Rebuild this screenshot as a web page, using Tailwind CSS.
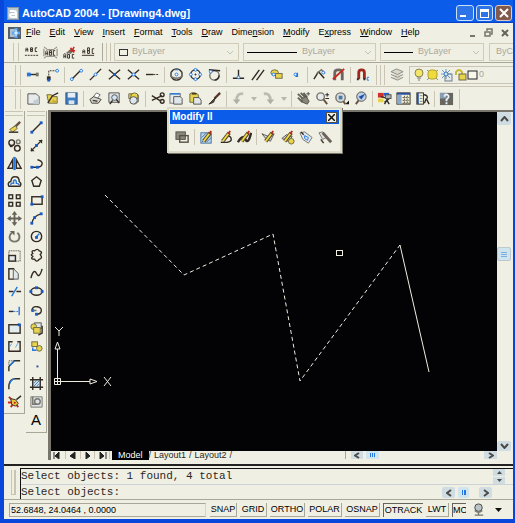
<!DOCTYPE html>
<html lang="en">
<head>
  <meta charset="UTF-8" />
  <meta name="viewport" content="width=device-width, initial-scale=1.0"/>
  <title>AutoCAD 2004 - [Drawing4.dwg]</title>

  <!-- Tailwind CDN -->
  <script src="https://cdn.jsdelivr.net/npm/@tailwindcss/browser@4"></script>

  <script>
    // Toolbar icons, 16x16. K = dark stroke, B = blue stroke, G = gray stroke
    const K = 'fill="none" stroke="#332b24" stroke-width="1.5"';
    const B = 'fill="none" stroke="#2478e0" stroke-width="1.5"';
    const G = 'fill="none" stroke="#77756c" stroke-width="1.5"';
    const Y = 'fill="#e8d44c" stroke="#6e6846"';
    const dot = (x, y) => `<rect x="${x - 1.5}" y="${y - 1.5}" width="3" height="3" fill="#1658c8"/>`;
    const ring = (x, y) => `<circle cx="${x}" cy="${y}" r="1.5" fill="#fff" stroke="#2478e0"/>`;
    const pencil = '<path d="M5 12L12 3" stroke="#55482f" stroke-width="4"/><path d="M5 12L11 4" stroke="#f0d840" stroke-width="2"/><path d="M11 4L13 1" stroke="#b82c22" stroke-width="2"/>';
    const icons = {
      abc: `<path d="M2 7V4L3 3L4 4V7M2 5H4M7 3V7H9V5H7H9V3H7M14 3H12V7H14" fill="none" stroke="#332b24"/><path d="M1 11H15" stroke="#332b24" stroke-dasharray="2 1"/>`,
      find: `<path d="M3 11V7L4 6L5 7V11M3 9H5M7 6V11H9V6H7M7 8H9M13 6H11V11H13" fill="none" stroke="#332b24"/><path d="M1 2L5 5H11L15 2M1 14L4 12H12L15 14M1 4V12M15 4V12" fill="none" stroke="#77756c"/>`,
      style: `<path d="M2 14V10L3 9L4 10V14M2 12H4M6 10V14H8V10H6M13 10H11V14H13" fill="none" stroke="#332b24"/><path d="M5 9L11 4M8 9L13 5" stroke="#77756c" stroke-width="2"/><path d="M9 3L13 8M13 2L10 7M8 6H14" stroke="#c82820" stroke-width="1.5"/>`,
      just: `<path d="M2 9V6L3 5L4 6V9M2 7H4M7 3V9H9V6H7H9V3H7M14 4H12V9H14M1 11H14" fill="none" stroke="#332b24"/>`,
      track: `<path d="M3 8H13" ${K}/>${dot(3, 8)}<rect x="1" y="6" width="4" height="4" fill="#2478e0"/><path d="M12 6V10" stroke="#77756c" stroke-width="3"/>`,
      from: `<path d="M4 12V4H12" fill="none" stroke="#332b24" stroke-dasharray="2 1"/><rect x="2" y="10" width="4" height="4" fill="#332b24"/>${dot(4, 14)}${ring(13, 4)}`,
      endp: `<path d="M3 13L12 4" ${K}/>${ring(3, 13)}${ring(13, 4)}`,
      midp: `<path d="M2 14L14 2" ${K}/>${ring(8, 8)}`,
      inter: `<path d="M2 3L14 13M14 3L2 13" ${K}/>${dot(8, 8)}`,
      appint: `<path d="M2 3L14 13M14 3L2 13" ${K}/>${ring(8, 8)}`,
      ext: `<path d="M1 8H9" ${K}/><path d="M9 8H15" stroke="#332b24" stroke-dasharray="2 1"/>`,
      center: `<circle cx="8" cy="8" r="6" ${K}/><path d="M2 5V10Q8 14 14 10V5" ${G}/>${ring(8, 8)}<path d="M6 3H10" stroke="#2478e0"/>`,
      quad: `<circle cx="8" cy="8" r="5" ${K}/>${ring(8, 3)}${ring(8, 13)}${ring(3, 8)}${ring(13, 8)}<path d="M8 7V9M7 8H9" stroke="#332b24"/>`,
      tan: `<circle cx="8" cy="9" r="5" ${G}/><path d="M2 3L14 4" ${K}/>${ring(4, 5)}<path d="M13 9Q12 14 8 14" ${K}/>`,
      perp: `<path d="M8 3V11M2 12H14" ${K}/>${ring(8, 11)}`,
      para: `<path d="M2 14L10 3M7 14L15 3" ${K}/>`,
      insert: `<ellipse cx="6" cy="6" rx="4" ry="3" ${Y}/><rect x="7" y="7" width="7" height="5" ${Y}/>${ring(5, 8)}`,
      node: `${ring(8, 8)}<path d="M10 6V10H8" ${B}/>`,
      near: `<path d="M2 13L7 5M7 5L13 12" ${K}/><path d="M5 7L10 3L14 7" ${G}/>${ring(12, 6)}`,
      none: `<path d="M4 14V6Q4 3 8 3Q12 3 12 6V14" fill="none" stroke="#6c6660" stroke-width="3"/><path d="M2 13L14 2" stroke="#c82820" stroke-width="2"/>`,
      magnet: `<path d="M4 13V6Q4 3 7 3Q10 3 10 6V13" fill="none" stroke="#9c2820" stroke-width="3"/><path d="M3 12V14M10 12V14" stroke="#332b24" stroke-width="2"/><path d="M15 11H13V14H15" fill="none" stroke="#2478e0"/>`,
      layers: `<path d="M1 5L7 2L14 5L8 8ZM1 8L8 11L14 8M1 11L8 14L14 11" fill="#d8d7cc" stroke="#8c8a80"/>`,
      neu: `<path d="M2 3H11L14 6V14H2Z" fill="#e6eaea" stroke="#55524c"/><path d="M8 14V10L14 8V14Z" fill="#c2ccd2"/>`,
      open: `<path d="M2 4H7L8 6H13V13H4Z" ${Y}/><path d="M3 13L8 5L14 2" ${K}/><path d="M8 10L12 12" stroke="#c8a830" stroke-width="2"/>`,
      save: `<rect x="2" y="2" width="12" height="12" fill="#3c7cc4" stroke="#2f527c"/><rect x="4" y="2" width="8" height="5" fill="#e6eef4"/><rect x="5" y="10" width="6" height="4" fill="#dce4e8"/>`,
      print: `<path d="M5 7L9 2L13 4L10 8" fill="#fff" stroke="#666"/><path d="M2 9L6 6L14 9L11 13L4 13Z" fill="#d4d4cc" stroke="#44423c"/><path d="M5 10L10 11" stroke="#44423c" stroke-width="1.5"/>`,
      preview: `<path d="M2 2H13V12H2Z" fill="#dbe3e8" stroke="#55524c"/><circle cx="8" cy="7" r="3" fill="#cfe4f4" stroke="#55524c"/><path d="M6 10L3 14M10 9L13 13" ${K}/>`,
      publish: `<path d="M3 3H9V8H3Z" ${Y}/><circle cx="9" cy="6" r="4" ${Y}/><circle cx="8" cy="10" r="4" fill="#dce6ee" stroke="#55524c"/><path d="M13 4V11L9 14" ${G}/>`,
      cut: `<path d="M2 5L12 11M2 10L13 5" ${K}/><circle cx="13" cy="4" r="2" ${K}/><circle cx="13" cy="11" r="2" ${K}/>`,
      copy: `<rect x="1" y="3" width="11" height="10" fill="#e6eaea" stroke="#77756c"/><path d="M5 6H12L14 8V14H5Z" fill="#dde6ea" stroke="#55524c"/><path d="M1 3H12" ${B}/>`,
      paste: `<path d="M2 3Q6 0 11 4V12H2Z" ${Y}/><path d="M6 7H12L14 10V14H6Z" fill="#e0e6e8" stroke="#55524c"/><path d="M4 3H9" ${K}/>`,
      brush: `<path d="M14 2L8 8" stroke="#55382a" stroke-width="2.5"/><path d="M9 7L4 12L2 14L7 12Z" fill="#55524c" stroke="#332b24"/>`,
      undo: `<path d="M13 3Q6 2 6 10" fill="none" stroke="#bdbcb2" stroke-width="3"/><path d="M2 9H10L6 14Z" fill="#b0afa6"/>`,
      redo: `<path d="M3 3Q10 2 10 10" fill="none" stroke="#bdbcb2" stroke-width="3"/><path d="M6 9H14L10 14Z" fill="#b0afa6"/>`,
      pan: `<path d="M2 3L8 9M5 2L10 7M8 2L12 7M2 7L7 12" stroke="#66645a" stroke-width="2"/><path d="M6 8L11 6L14 11L12 14L7 12Z" fill="#88867a" stroke="#55524c"/><path d="M11 3H15M13 1V5" stroke="#55524c"/>`,
      zoomrt: `<circle cx="6" cy="6" r="4" fill="#e6ecee" stroke="#77756c" stroke-width="1.5"/><path d="M9 9L13 14" stroke="#665040" stroke-width="2"/><path d="M11 4H15M13 2V6M11 8H15" stroke="#222"/>`,
      zoomwin: `<circle cx="7" cy="7" r="5" fill="#d8dfe2" stroke="#77756c" stroke-width="1.5"/><rect x="5" y="5" width="4" height="4" fill="#4878a8"/><path d="M10 11L12 14" stroke="#665040" stroke-width="2"/><path d="M12 14H16V10Z" fill="#111"/>`,
      zoomprev: `<circle cx="9" cy="6" r="5" fill="#bed0e4" stroke="#55524c"/><path d="M6 10L3 14" stroke="#665040" stroke-width="2"/><path d="M13 3L6 6L9 9Z" fill="#1c50a8"/>`,
      props: `<rect x="1" y="2" width="6" height="5" fill="#d03028"/><rect x="7" y="2" width="6" height="3" fill="#1c60d8"/><path d="M1 8H7V12H1Z" fill="#e8d44c"/><path d="M4 6L13 8L8 12M10 9L13 14M11 9L8 14" ${K}/><rect x="9" y="4" width="6" height="4" fill="#a7b2b8" stroke="#55524c"/>`,
      dc: `<rect x="1" y="2" width="14" height="12" fill="#f7f5d6" stroke="#332b24"/><rect x="1" y="2" width="14" height="2" fill="#2450a0"/><rect x="2" y="4" width="4" height="10" fill="#8ca8c8"/><path d="M7 7H14M7 10H14M7 13H14M9 5V14M12 5V14" stroke="#55524c" stroke-dasharray="2 1"/>`,
      palette: `<rect x="2" y="2" width="7" height="12" fill="#f7f5d6" stroke="#332b24"/><rect x="2" y="2" width="2" height="12" fill="#2450a0"/><path d="M5 5H8M5 8H8M5 11H8" stroke="#6b88a8"/><path d="M9 4Q14 4 13 8M12 8L15 14M12 8L10 13" ${K}/>`,
      help: `<rect x="1" y="2" width="14" height="13" fill="#66665f"/><path d="M1 2H8V8H1Z" fill="#8a9cb0"/><path d="M6 6Q6 3 9 4Q12 6 8 9V11M8 12V14" fill="none" stroke="#e8f2fa" stroke-width="2"/>`,
      erase: `<path d="M14 2L7 9" stroke="#665040" stroke-width="2.5"/><path d="M9 6L3 10L6 13L11 9Z" ${Y}/><path d="M2 13H12" ${K}/>`,
      copyobj: `<circle cx="5" cy="5" r="3" ${K}/><circle cx="11" cy="11" r="3" ${K}/><circle cx="12" cy="4" r="2" ${G}/><path d="M3 9H6" ${K}/>`,
      mirror: `<path d="M6 4V13H1ZM10 4V13H15Z" ${K}/><path d="M8 1V15" stroke="#2478e0" stroke-width="2.5"/>`,
      offset: `<path d="M2 13Q0 9 4 8Q5 2 9 3Q13 3 13 8Q16 10 14 13Z" ${K}/><path d="M4 12Q4 9 7 10V7Q10 5 10 10Q13 10 13 12" ${B}/>`,
      array: `<rect x="2" y="2" width="4" height="4" ${K}/><rect x="10" y="2" width="4" height="4" ${K}/><rect x="2" y="10" width="4" height="4" ${K}/><rect x="10" y="10" width="4" height="4" ${K}/>`,
      move: `<path d="M8 2V14M2 8H14" stroke="#66645a" stroke-width="2"/><path d="M8 0L11 4H5ZM8 16L5 12H11ZM0 8L4 5V11ZM16 8L12 11V5Z" fill="#66645a"/>`,
      rotate: `<path d="M5 4Q1 8 4 12Q8 15 12 12Q15 7 11 4" fill="none" stroke="#77756c" stroke-width="2"/><path d="M3 2H8V7Z" fill="#66645a"/>`,
      scale: `<rect x="2" y="8" width="7" height="6" fill="#e2e8ea" stroke="#332b24" stroke-width="1.5"/><path d="M2 7V3H14V14H10" fill="none" stroke="#332b24" stroke-dasharray="1 1"/>`,
      stretch: `<path d="M2 3H7V14H2Z" ${K}/><path d="M7 3L12 8V14H7" fill="#dce8ee" stroke="#55524c"/>`,
      trim: `<path d="M2 8H7M10 8H15" ${K}/><path d="M5 13L11 3" ${B}/>`,
      extend: `<path d="M2 9H7" ${K}/><path d="M7 9H12" stroke="#2478e0" stroke-dasharray="2 1"/><path d="M13 4V13" ${B}/>`,
      breakp: `<rect x="2" y="4" width="12" height="9" fill="#e2ecec" stroke="#332b24" stroke-width="1.5"/>${dot(13, 4)}`,
      brk: `<path d="M6 3H2V13H14V3H11" ${K}/><path d="M5 5L3 8M12 4L9 9" stroke="#58a8e8"/>`,
      chamfer: `<path d="M2 14V9L8 3H14" ${K}/><path d="M3 8L8 3" ${B}/><path d="M2 7V3H7" fill="none" stroke="#332b24" stroke-dasharray="1 1"/>`,
      fillet: `<path d="M2 14V10Q3 3 9 3H14" ${K}/><path d="M3 8Q4 4 8 3" ${B}/>`,
      explode: `<path d="M2 3L6 7M1 9H6M4 14L7 10M12 14L9 10" stroke="#c82820" stroke-width="2"/><path d="M4 5L9 6L12 10L9 13L5 11Z" fill="#e8c83c" stroke="#332b24"/><path d="M7 8L10 9L8 11Z" fill="#c82820"/><path d="M10 6L15 2" ${K}/>`,
      line: `<path d="M3 13L13 3" ${K}/>${dot(3, 13)}${dot(13, 3)}`,
      xline: `<path d="M2 14L14 2" ${K}/>${dot(8, 8)}<path d="M10 2H14V6ZM2 10V14H6Z" fill="#332b24"/>`,
      pline: `<path d="M3 12H10Q14 11 14 8Q14 5 9 4" ${K}/>${dot(3, 12)}${dot(9, 12)}`,
      polygon: `<path d="M8 3L13 7L11 13H5L3 7Z" ${K}/>`,
      rect: `<rect x="3" y="4" width="11" height="8" ${K}/>${dot(3, 12)}${dot(14, 4)}`,
      arc: `<path d="M3 14Q4 5 13 3" ${K}/>${dot(3, 13)}${dot(6, 7)}${dot(13, 3)}`,
      circle: `<circle cx="8" cy="8" r="5.5" ${K}/><path d="M8 8L11 5" ${B}/>${dot(8, 9)}`,
      cloud: `<path d="M4 6Q2 2 6 3Q9 0 11 3Q15 4 12 7Q15 11 11 12Q8 16 6 12Q1 12 4 9Q1 7 4 6Z" ${K}/>`,
      spline: `<path d="M2 13Q5 2 8 8T14 3" ${K}/>`,
      ellipse: `<ellipse cx="8" cy="8" rx="6" ry="4" ${K}/>${dot(2, 8)}${dot(8, 4)}${dot(14, 8)}`,
      earc: `<path d="M3 8Q4 3 9 4Q14 5 13 9Q12 12 8 12" ${K}/>${dot(4, 8)}${dot(8, 12)}<path d="M8 8L4 8" ${G}/>`,
      insblk: `<rect x="6" y="2" width="7" height="6" fill="#dde6ea" stroke="#55524c"/><circle cx="5" cy="6" r="3" ${Y}/><rect x="5" y="7" width="7" height="6" ${Y}/><path d="M14 5V13L10 15" ${K}/>`,
      mkblk: `<rect x="3" y="3" width="6" height="5" ${Y}/><circle cx="11" cy="10" r="3" ${Y}/><path d="M4 9V12H8" ${B}/>`,
      point: `<rect x="8" y="8" width="2" height="2" fill="#1c4c98"/>`,
      hatch: `<rect x="4" y="4" width="8" height="8" fill="#cfe2ee"/><path d="M4 1V15M12 1V15M1 4H15M1 12H15" ${K}/><path d="M5 11L11 5M5 8L8 5M8 11L11 8" stroke="#5080b0"/>`,
      region: `<path d="M2 3H14V14H2Z" fill="#dbe3e8" stroke="#77756c"/><circle cx="9" cy="8" r="3" ${G}/><path d="M4 3V11H8" ${G}/>`,
      order: `<rect x="1" y="2" width="10" height="8" fill="#8a8878" stroke="#55524c"/><rect x="5" y="6" width="9" height="7" fill="none" stroke="#55524c" stroke-width="1.5"/>`,
      edhatch: `<rect x="2" y="3" width="11" height="11" fill="#bcd8ee" stroke="#44709c"/><path d="M3 8L8 3M3 13L12 4M8 13L13 8" stroke="#44709c"/>${pencil}`,
      edpline: `<path d="M8 6Q15 6 14 11Q12 14 3 13" ${K}/>${pencil}`,
      edspline: `<path d="M1 13Q6 4 9 10T15 3" fill="none" stroke="#332b24" stroke-width="2.5"/>${pencil}`,
      edattr: `<path d="M1 4L8 7L14 4L10 12L5 9Z" fill="#d7dfe2" stroke="#55524c"/>${pencil}`,
      blkattr: `<path d="M2 9L7 5L13 7L9 12Z" fill="#d7dfe2" stroke="#55524c"/><circle cx="12" cy="12" r="3" ${Y}/>${pencil}`,
      sync: `<path d="M1 3L6 2L14 8L10 14L4 10Z" fill="#dfe9ee" stroke="#77756c"/><path d="M6 6L10 8L9 11L6 9Z" fill="none" stroke="#2478e0"/><path d="M2 2L5 5" ${K}/>`,
      extr: `<path d="M1 3L5 2L9 8L5 10Z" fill="#dfe3e2" stroke="#77756c"/><path d="M5 3L14 13" stroke="#6c6258" stroke-width="3"/><path d="M3 10L6 14" ${K}/>`,
      comm: `<circle cx="8" cy="6" r="4" fill="#b8c4c8" stroke="#44423c"/><path d="M4 9Q8 13 12 9M8 11V14M4 14H13" ${G}/>`
    };

    // "|" is a separator, "v" a flyout arrow
    document.addEventListener("DOMContentLoaded", () => {
      document.querySelectorAll("[data-icons]").forEach((bar) => {
        const column = bar.dataset.dir === "col";
        bar.innerHTML = bar.dataset.icons.split(" ").map((name) => {
          if (name === "|") return '<span class="mx-[2px] h-4 w-px shrink-0 bg-[#c9c5b2]"></span>';
          if (name === "v") return '<button aria-label="More" class="flex w-[11px] shrink-0 justify-center"><svg class="h-1 w-2" viewBox="0 0 8 4"><path d="M1 0H7L4 4Z" fill="#b8b7ae"/></svg></button>';
          const size = column ? "flex h-4 w-5 shrink-0 items-center justify-center" : "flex h-5 w-[19px] shrink-0 items-center justify-center";
          return `<button aria-label="${name}" class="${size}"><svg class="size-[15px]" viewBox="0 0 16 16">${icons[name] || ""}</svg></button>`;
        }).join("");
      });
    });
  </script>
</head>

<body class="flex h-screen flex-col overflow-hidden border-r-2 border-b-4 border-l-4 border-[#0846dc] bg-[#f0efe3] font-['Liberation_Sans',sans-serif] text-[9px] text-[#2b2723]">

  <!-- Title bar -->
  <header class="flex h-[23px] shrink-0 items-center border-b border-[#0740c8] bg-[#0b5ce8] pr-px pl-[3px] pt-[4px]">
    <svg class="h-[13px] w-3" viewBox="0 0 12 13"><rect width="12" height="13" fill="#8396a8"/><rect x="1" y="1" width="10" height="11" fill="#bcc8d0"/><path d="M3 4H7Q9 4 9 6V10H5Q3 10 3 8Q3 7 5 7H9" fill="none" stroke="#fff" stroke-width="2"/></svg>
    <h1 class="ml-[3px] flex-1 text-[11px] font-bold whitespace-nowrap text-white">AutoCAD 2004 - [Drawing4.dwg]</h1>
    <div class="flex gap-[2px]">
      <button aria-label="Minimize" class="flex h-4 w-[18px] items-end rounded-[3px] border border-[#c8e0fa] bg-[#2c74e8] p-[3px]"><span class="h-[2px] w-[6px] bg-white"></span></button>
      <button aria-label="Restore" class="flex h-4 w-[17px] items-center justify-center rounded-[3px] border border-[#c8e0fa] bg-[#2c74e8]"><span class="h-[9px] w-[9px] border border-t-[3px] border-white"></span></button>
      <button aria-label="Close" class="flex h-4 w-[17px] items-center justify-center rounded-[3px] border border-[#e8c8bc] bg-[#805a4c]"><svg class="size-[10px]" viewBox="0 0 10 10"><path d="M1 1L9 9M9 1L1 9" stroke="#fff" stroke-width="2"/></svg></button>
    </div>
  </header>

  <!-- Menu bar -->
  <nav class="flex h-[19px] shrink-0 items-center pl-[4px]">
    <svg class="mr-[5px] h-[12px] w-[13px]" viewBox="0 0 13 12"><rect width="13" height="12" fill="#55606c"/><path d="M2 2H7V10H2Z" fill="#b8bfc4"/><path d="M8 1V11M4 6H12" stroke="#58a8f4" stroke-width="3"/><path d="M8 3V9M6 6H10" stroke="#fff"/></svg>
    <div class="flex flex-1 gap-[9px] text-black">
      <a href="#"><u>F</u>ile</a>
      <a href="#"><u>E</u>dit</a>
      <a href="#"><u>V</u>iew</a>
      <a href="#"><u>I</u>nsert</a>
      <a href="#"><u>F</u>ormat</a>
      <a href="#"><u>T</u>ools</a>
      <a href="#"><u>D</u>raw</a>
      <a href="#">Dime<u>n</u>sion</a>
      <a href="#"><u>M</u>odify</a>
      <a href="#">E<u>x</u>press</a>
      <a href="#"><u>W</u>indow</a>
      <a href="#"><u>H</u>elp</a>
    </div>
    <div class="flex items-center gap-2 pr-1">
      <button aria-label="Minimize drawing"><svg class="size-[9px]" viewBox="0 0 9 9"><path d="M3 8H8" stroke="#77756c" stroke-width="2"/></svg></button>
      <button aria-label="Restore drawing"><svg class="size-[9px]" viewBox="0 0 9 9"><path d="M3 3V1H8V6H7M1 4H6V8H1Z" fill="none" stroke="#77756c" stroke-width="1.5"/></svg></button>
      <button aria-label="Close drawing"><svg class="size-[8px]" viewBox="0 0 8 8"><path d="M1 1L7 7M7 1L1 7" stroke="#66645a" stroke-width="2"/></svg></button>
    </div>
  </nav>

  <!-- Text and properties toolbars -->
  <div class="flex h-[21px] shrink-0 items-center overflow-hidden border-b border-[#a9a798] pl-[9px]">
    <span class="h-[18px] w-[6px] shrink-0 border-x border-[#c9c5b2]"></span>
    <div class="ml-[3px] flex items-center" data-icons="abc find style just"></div>
    <span class="ml-1 h-[18px] w-px shrink-0 bg-[#a9a798]"></span>
    <span class="mx-[3px] h-[18px] w-[5px] shrink-0 border-x border-[#c9c5b2]"></span>
    <button aria-label="Color" class="flex h-[18px] w-[125px] shrink-0 items-center border border-[#d0ccb8] px-1 text-[#aaa89c]"><span class="mr-1 h-[7px] w-[9px] border border-[#333]"></span>ByLayer<svg class="ml-auto h-[5px] w-2" viewBox="0 0 8 5"><path d="M1 1L4 4L7 1" fill="none" stroke="#c4c2b6"/></svg></button>
    <button aria-label="Linetype" class="ml-1 flex h-[18px] w-[133px] shrink-0 items-center border border-[#d0ccb8] px-[3px] text-[#aaa89c]"><span class="mr-[5px] h-px w-[50px] bg-black"></span>ByLayer<svg class="ml-auto h-[5px] w-2" viewBox="0 0 8 5"><path d="M1 1L4 4L7 1" fill="none" stroke="#c4c2b6"/></svg></button>
    <button aria-label="Lineweight" class="ml-1 flex h-[18px] w-[104px] shrink-0 items-center border border-[#d0ccb8] px-[3px] text-[#aaa89c]"><span class="mr-[5px] h-px w-[29px] bg-black"></span>ByLayer<svg class="ml-auto h-[5px] w-2" viewBox="0 0 8 5"><path d="M1 1L4 4L7 1" fill="none" stroke="#c4c2b6"/></svg></button>
    <button aria-label="Plot style" class="ml-[5px] flex h-[18px] w-20 shrink-0 items-center border border-[#d0ccb8] px-[6px] text-[#aaa89c]">ByColor</button>
  </div>

  <!-- Object snap and layers toolbars -->
  <div class="flex h-[24px] shrink-0 items-center overflow-hidden border-b border-[#c9c5b2] pl-[11px]">
    <span class="h-[20px] w-[6px] shrink-0 border-x border-[#c9c5b2]"></span>
    <div class="ml-[3px] flex items-center" data-icons="track from | endp midp inter appint ext | center quad tan | perp para insert node | near none | magnet"></div>
    <span class="ml-[4px] h-[20px] w-px shrink-0 bg-[#c9c5b2]"></span>
    <span class="mx-[3px] h-[20px] w-[5px] shrink-0 border-x border-[#c9c5b2]"></span>
    <div class="flex shrink-0" data-icons="layers"></div>
    <button aria-label="Layer" class="ml-[2px] flex h-[18px] min-w-0 flex-1 items-center border-y border-l border-[#c9c5b2] text-[#aaa89c]">
      <svg class="ml-[3px] h-[14px] w-[66px] shrink-0" viewBox="0 0 66 14"><circle cx="6" cy="5" r="4" fill="#f2e66a" stroke="#8c8550"/><path d="M4 10H8M5 12H7" stroke="#77756c"/><path d="M14 2L25 12M25 2L14 12" stroke="#7b90a0"/><rect x="15" y="2" width="9" height="9" rx="3" fill="#efdc3c" stroke="#b0a030"/><rect x="32" y="6" width="7" height="7" fill="#e4e8e6" stroke="#6f7e88"/><path d="M28 6H38M33 1V11M29 2L37 10M37 2L29 10" stroke="#6c9ac8"/><circle cx="33" cy="6" r="2" fill="#cfe4f4" stroke="#3c78b8"/><path d="M43 7V4Q46 0 49 4V6" fill="none" stroke="#c8b838" stroke-width="2"/><rect x="46" y="6" width="7" height="6" fill="#e8d44c" stroke="#6e6846"/><rect x="55" y="3" width="9" height="8" fill="#f8f7ee" stroke="#222"/></svg>0
    </button>
  </div>

  <!-- Standard toolbar -->
  <div class="flex h-[23px] shrink-0 items-center overflow-hidden pl-[11px]">
    <span class="h-[20px] w-[6px] shrink-0 border-x border-[#c9c5b2]"></span>
    <div class="ml-[3px] flex items-center" data-icons="neu open save | print preview publish | cut copy paste brush | undo v redo v | pan zoomrt zoomwin zoomprev | props dc palette | help"></div>
    <span class="ml-[3px] h-[20px] w-px shrink-0 bg-[#c9c5b2]"></span>
  </div>

  <!-- Work area -->
  <main class="relative flex min-h-0 flex-1">
    <!-- Modify and Draw toolbars -->
    <div class="flex w-[44px] shrink-0 items-start gap-px pt-[1px]">
      <div class="border-r border-b border-[#a9a798] pb-[3px]">
        <div class="mx-px h-[5px] border-y border-[#c9c5b2]"></div>
        <div class="mt-[3px] flex h-[291px] flex-col justify-between" data-dir="col" data-icons="erase copyobj mirror offset array move rotate scale stretch trim extend breakp brk chamfer fillet explode"></div>
      </div>
      <div class="border-r border-b border-[#a9a798] pb-[3px]">
        <div class="mx-px h-[5px] border-y border-[#c9c5b2]"></div>
        <div class="mt-[3px] flex h-[291px] flex-col justify-between" data-dir="col" data-icons="line xline pline polygon rect arc circle cloud spline ellipse earc insblk mkblk point hatch region"></div>
        <button aria-label="Multiline text" class="block h-[19px] w-5 text-[15px] leading-[19px] text-black">A</button>
      </div>
    </div>

    <!-- Drawing window -->
    <section class="flex min-w-0 flex-1 flex-col border-t-2 border-l-[3px] border-[#77756c]">
      <div class="flex min-h-0 flex-1">
        <div class="min-w-0 flex-1 overflow-hidden bg-[#030205]">
          <svg class="h-[338px] w-[446px]" viewBox="51 112 446 338" fill="none" stroke="#efeee0">
            <path d="M105 195L184 275L273 234L300 381L400 245" stroke-dasharray="4 3"/>
            <path d="M400 245L429 372"/>
            <rect x="336.500" y="250.500" width="6" height="5"/>
            <path d="M57.500 349V381.500H90M54.500 378.500H60.500V384.500H54.500ZM54.500 381.500H60M57.500 379V384M57.500 342L55 349H60ZM97 381.500L90 379V384Z"/>
            <path d="M55 327L59 331V336M63 327L59 331M104 377L111 386M111 377L104 386"/>
          </svg>
        </div>
        <div class="flex w-4 shrink-0 flex-col items-start justify-between">
          <button aria-label="Scroll up" class="flex h-[13px] w-[14px] items-center justify-center rounded-[2px] bg-[#cfdde2]"><svg class="h-[6px] w-[9px]" viewBox="0 0 9 6"><path d="M1 5L4.500 1L8 5" fill="none" stroke="#4c4a46" stroke-width="2"/></svg></button>
          <button aria-label="Vertical scroll" class="mb-[58px] flex h-[14px] w-[14px] flex-col items-center justify-center gap-px rounded-[2px] border border-[#bccacd] bg-[#cfe4ee]"><span class="h-px w-[6px] bg-[#78b0e0]"></span><span class="h-px w-[6px] bg-[#78b0e0]"></span><span class="h-px w-[6px] bg-[#78b0e0]"></span></button>
          <button aria-label="Scroll down" class="flex h-[10px] w-[14px] items-center justify-center rounded-[2px] bg-[#cfdde2]"><svg class="h-[6px] w-[9px]" viewBox="0 0 9 6"><path d="M1 1L4.500 5L8 1" fill="none" stroke="#4c4a46" stroke-width="2"/></svg></button>
        </div>
      </div>
      <!-- Layout tabs -->
      <div class="flex h-[9px] shrink-0 items-start overflow-hidden">
        <svg class="h-[8px] w-[61px] shrink-0" viewBox="0 0 61 8"><path d="M14.500 0V8M29.500 0V8M43.500 0V8M58.500 0V8" stroke="#c9c5b2"/><path d="M3 1V8M8 1V8L4 5ZM24 1V8L19 5ZM35 1V8L39 5ZM49 1V8L53 5ZM55 1V8" fill="#222" stroke="#222"/></svg>
        <div class="flex text-[9px] leading-[9px]">
          <button class="bg-black px-[6px] text-white">Model</button><span>/</span>
          <button class="px-[3px]">Layout1</button><span>/</span>
          <button class="px-[3px]">Layout2</button><span>/</span>
        </div>
        <div class="mr-[16px] ml-auto flex h-[8px] w-[152px] items-center border-l border-[#a9a798] pl-[5px]">
          <button aria-label="Scroll left" class="flex h-[8px] w-[12px] items-center justify-center bg-[#cfdde2]"><svg class="h-[7px] w-[6px]" viewBox="0 0 6 7"><path d="M5 1L1 3.500L5 6" fill="none" stroke="#4c4a46" stroke-width="2"/></svg></button>
          <button aria-label="Horizontal scroll" class="ml-[3px] flex h-[8px] w-[13px] items-center justify-center gap-px bg-[#cfe4ee]"><span class="h-1 w-px bg-[#2478e0]"></span><span class="h-1 w-px bg-[#2478e0]"></span><span class="h-1 w-px bg-[#2478e0]"></span></button>
          <button aria-label="Scroll right" class="ml-auto flex h-[8px] w-[13px] items-center justify-center bg-[#cfdde2]"><svg class="h-[7px] w-[6px]" viewBox="0 0 6 7"><path d="M1 1L5 3.500L1 6" fill="none" stroke="#4c4a46" stroke-width="2"/></svg></button>
        </div>
      </div>
    </section>

    <!-- Modify II, floats over the drawing -->
    <aside class="absolute top-[-3px] left-[163px] w-[175px] border-2 border-[#dcd9c8] bg-[#f0efe3] p-px pb-[4px] shadow-[1px_1px_0_#77756c]">
      <div class="flex h-[14px] items-center justify-between bg-[#0b5ce8] pr-[2px] pl-[2px]">
        <h2 class="text-[10px] leading-[14px] font-bold text-white">Modify II</h2>
        <button aria-label="Close Modify II" class="flex size-[11px] items-center justify-center border border-[#55524c] bg-[#f0efe3]"><svg class="size-[7px]" viewBox="0 0 7 7"><path d="M0 0L7 7M7 0L0 7" stroke="#111" stroke-width="1.5"/></svg></button>
      </div>
      <div class="flex items-center pt-[3px] pl-[3px]" data-icons="order | edhatch edpline edspline | edattr blkattr sync extr"></div>
    </aside>
  </main>

  <!-- Command line -->
  <section class="mt-[4px] flex h-[36px] shrink-0 border-t-2 border-b border-[#222] border-b-[#a9a798] pt-[2px]">
    <span class="mt-[2px] mr-[4px] ml-[7px] h-[25px] w-[5px] shrink-0 border-r-2 border-b border-l border-[#c9c5b2]"></span>
    <div class="min-w-0 flex-1 border-t border-l border-[#111] font-['Liberation_Mono',monospace] text-[11px] leading-[15px]">
      <div class="flex justify-between border-b border-[#ccd2d6]">
        <p>Select objects: 1 found, 4 total</p>
        <div class="mr-[8px] flex flex-col gap-px">
          <button aria-label="History up" class="flex h-[7px] w-[12px] items-center justify-center bg-[#cfdde2]"><svg class="h-[3px] w-[5px]" viewBox="0 0 5 3"><path d="M0 3H5L2.500 0Z" fill="#4c4a46"/></svg></button>
          <button aria-label="History down" class="flex h-[7px] w-[12px] items-center justify-center bg-[#cfdde2]"><svg class="h-[3px] w-[5px]" viewBox="0 0 5 3"><path d="M0 0H5L2.500 3Z" fill="#4c4a46"/></svg></button>
        </div>
      </div>
      <div class="flex items-center">
        <label for="command">Select objects:</label>
        <input id="command" class="h-[14px] min-w-0 flex-1 bg-transparent outline-none" />
        <div class="mr-[21px] flex">
          <button aria-label="Command scroll left" class="flex h-[11px] w-[13px] items-center justify-center rounded-[2px] bg-[#cfdde2]"><svg class="h-[8px] w-[6px]" viewBox="0 0 6 8"><path d="M5 1L1 4L5 7" fill="none" stroke="#4c4a46" stroke-width="2"/></svg></button>
          <button aria-label="Command scroll" class="ml-[3px] flex h-[11px] w-[11px] items-center justify-center gap-px rounded-[2px] bg-[#cfe4ee]"><span class="h-[5px] w-px bg-[#2478e0]"></span><span class="h-[5px] w-[2px] bg-[#2478e0]"></span></button>
          <button aria-label="Command scroll right" class="ml-[10px] flex h-[11px] w-[13px] items-center justify-center rounded-[2px] bg-[#cfdde2]"><svg class="h-[8px] w-[6px]" viewBox="0 0 6 8"><path d="M1 1L5 4L1 7" fill="none" stroke="#4c4a46" stroke-width="2"/></svg></button>
        </div>
      </div>
    </div>
  </section>

  <!-- Status bar -->
  <footer class="flex h-[19px] shrink-0 items-center gap-[3px] overflow-hidden pl-[5px] text-[9px] leading-[13px] whitespace-nowrap text-black">
    <output class="mr-px h-[14px] w-[197px] shrink-0 border border-[#a9a798] border-r-[#d8d5c6] pl-px leading-[12px]">52.6848, 24.0464 , 0.0000</output>
    <button class="h-[14px] w-[27px] shrink-0 border-r border-b border-[#a9a798]">SNAP</button>
    <button class="h-[14px] w-[27px] shrink-0 border-r border-b border-[#a9a798]">GRID</button>
    <button class="h-[14px] w-[35px] shrink-0 border-r border-b border-[#a9a798]">ORTHO</button>
    <button class="h-[14px] w-[34px] shrink-0 border-r border-b border-[#a9a798]">POLAR</button>
    <button class="h-[14px] w-[35px] shrink-0 border-r border-b border-[#a9a798]">OSNAP</button>
    <button class="h-[14px] w-[40px] shrink-0 border-t border-l border-[#66645a]">OTRACK</button>
    <button class="h-[14px] w-[23px] shrink-0 border-r border-b border-[#a9a798]">LWT</button>
    <button class="h-[14px] w-[14px] shrink-0 overflow-hidden border-t border-l border-[#66645a] text-left">MODEL</button>
    <div data-icons="comm"></div>
    <button aria-label="Status menu" class="ml-1"><svg class="h-1 w-[7px]" viewBox="0 0 7 4"><path d="M0 0H7L3.500 4Z" fill="#111"/></svg></button>
  </footer>

</body>
</html>
